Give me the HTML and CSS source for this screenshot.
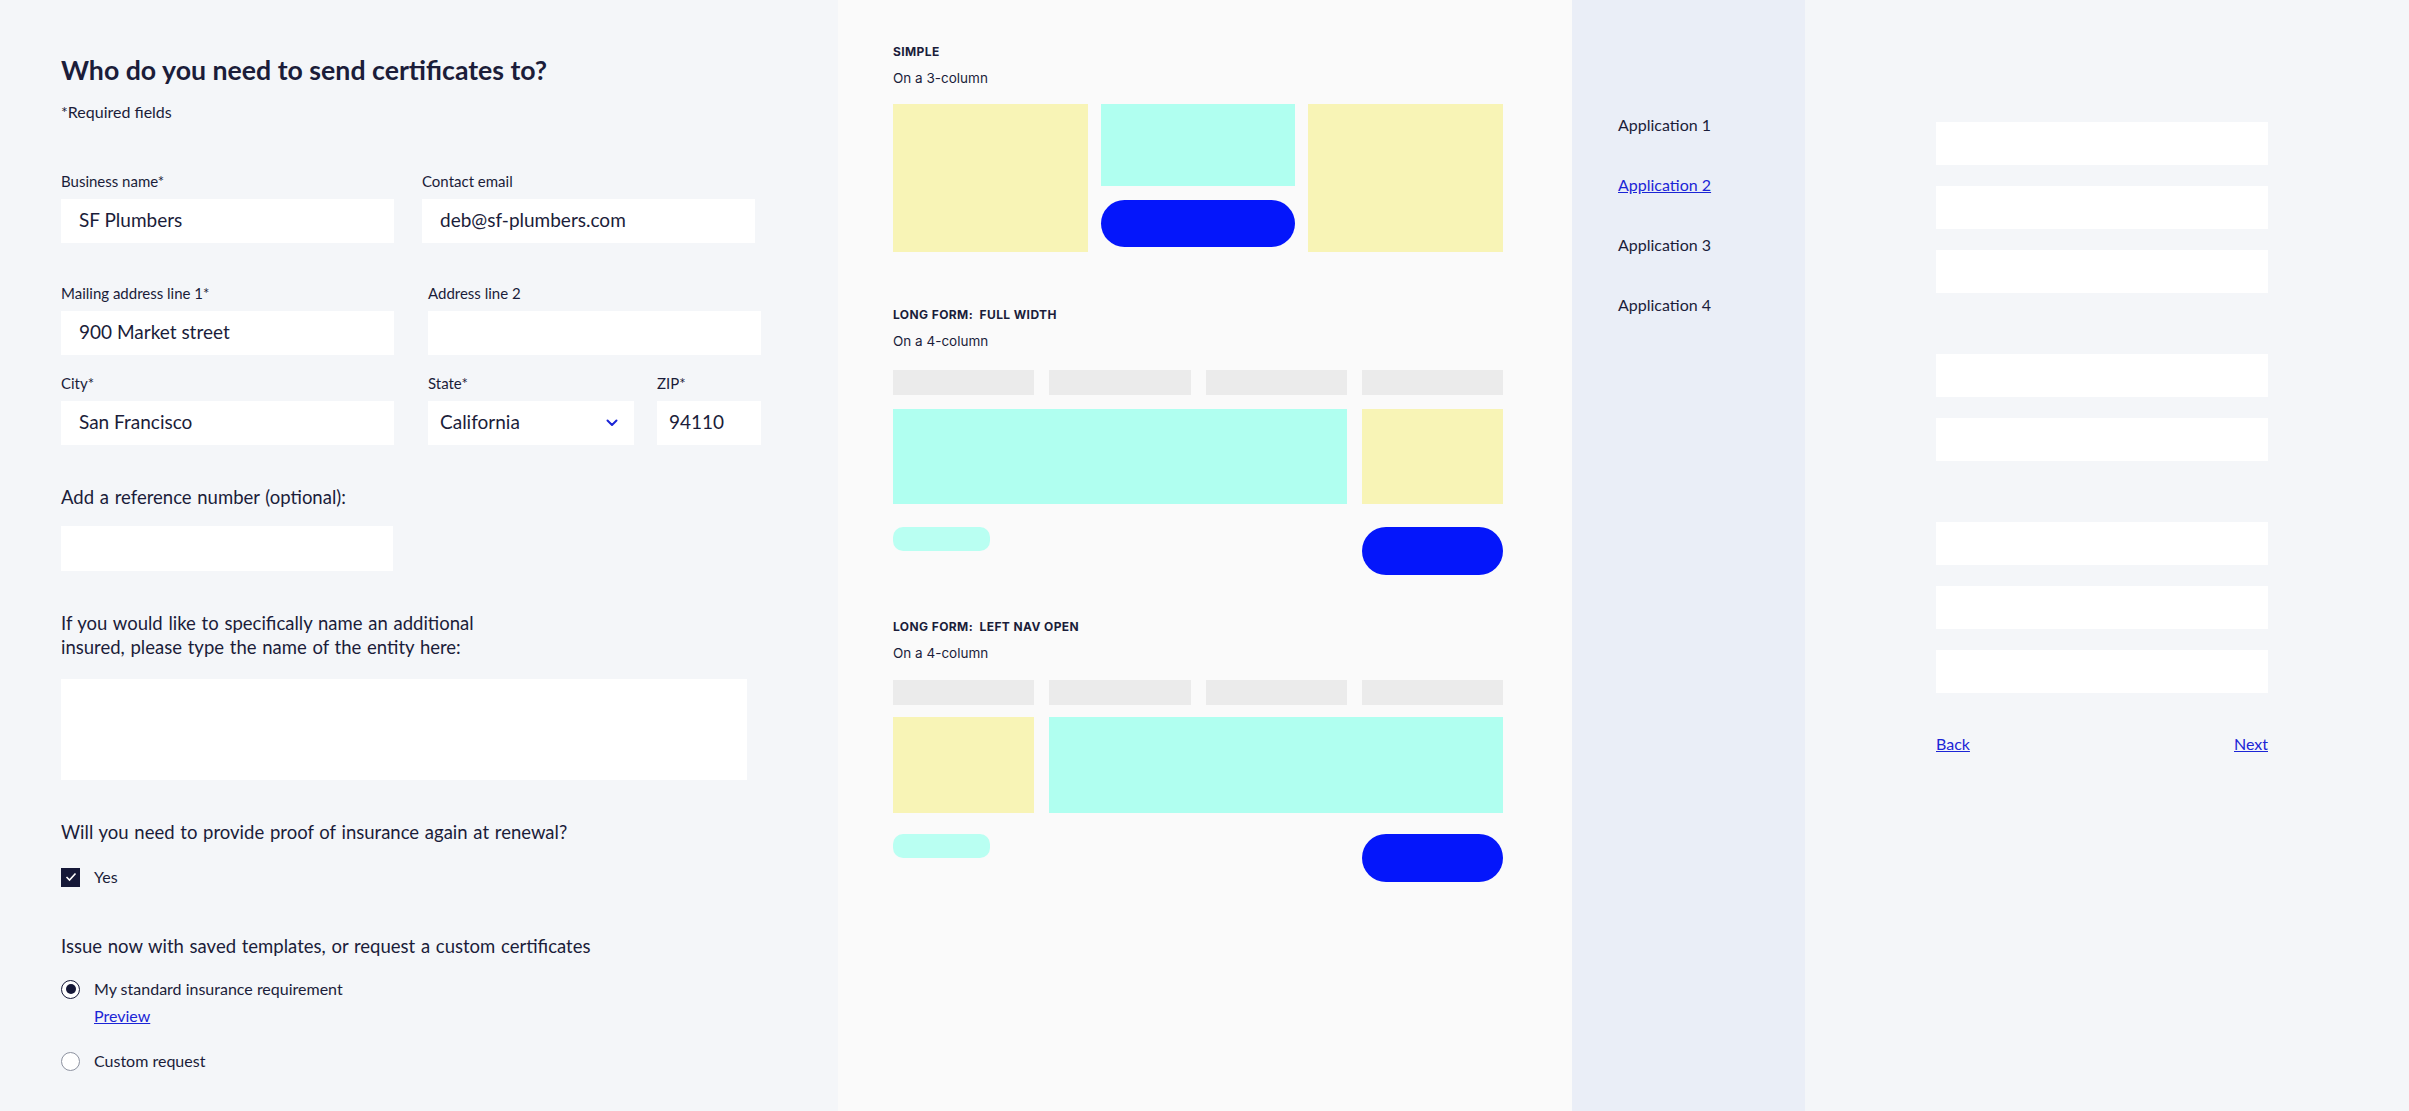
FILE: index.html
```html
<!DOCTYPE html>
<html>
  <head>
    <meta charset="UTF-8" />
    <meta name="viewport" content="width=device-width, initial-scale=1.0" />
    <link rel="stylesheet" href="styles.css">
    <title>Certificates</title>
  </head>

  <body>
    <!-- the form itself -->
    <section class="form-panel">
      <h1 class="form-title">Who do you need to send certificates to?</h1>
      <p class="required-note">*Required fields</p>

      <div class="field-row row-1">
        <div class="field">
          <label>Business name*</label>
          <input type="text" value="SF Plumbers">
        </div>
        <div class="field">
          <label>Contact email</label>
          <input type="text" value="deb@sf-plumbers.com">
        </div>
      </div>

      <div class="field-row row-2">
        <div class="field">
          <label>Mailing address line 1*</label>
          <input type="text" value="900 Market street">
        </div>
        <div class="field">
          <label>Address line 2</label>
          <input type="text" value="">
        </div>
      </div>

      <div class="field-row row-3">
        <div class="field city">
          <label>City*</label>
          <input type="text" value="San Francisco">
        </div>
        <div class="field state">
          <label>State*</label>
          <div class="select-wrap">
            <select>
              <option>California</option>
            </select>
            <svg class="chevron" width="12" height="8" viewBox="0 0 12 8"><path d="M1.5 1.5 L6 6 L10.5 1.5" fill="none" stroke="#1b25d6" stroke-width="2" stroke-linecap="round" stroke-linejoin="round"/></svg>
          </div>
        </div>
        <div class="field zip-field">
          <label>ZIP*</label>
          <input type="text" value="94110" class="zip">
        </div>
      </div>

      <p class="question q-ref">Add a reference number (optional):</p>
      <input type="text" class="ref-input">

      <p class="question q-insured">If you would like to specifically name an additional<br>insured, please type the name of the entity here:</p>
      <textarea class="entity-box"></textarea>

      <p class="question q-renewal">Will you need to provide proof of insurance again at renewal?</p>
      <div class="check-row">
        <span class="checkbox"><svg width="12" height="10" viewBox="0 0 12 10"><path d="M1.5 5 L4.5 8 L10.5 1.5" fill="none" stroke="#fff" stroke-width="1.6"/></svg></span>
        <span>Yes</span>
      </div>

      <p class="question q-issue">Issue now with saved templates, or request a custom certificates</p>
      <div class="radio-row">
        <span class="radio checked"></span>
        <span>My standard insurance requirement</span>
      </div>
      <a href="#" class="preview-link">Preview</a>
      <div class="radio-row radio-last">
        <span class="radio"></span>
        <span>Custom request</span>
      </div>
    </section>

    <!-- grid layouts -->
    <section class="layouts">
      <div class="layout">
        <h4>SIMPLE</h4>
        <p class="sub">On a 3-column</p>
        <div class="grid-3">
          <div class="block yellow tall"></div>
          <div class="stack">
            <div class="block cyan mid"></div>
            <div class="pill blue"></div>
          </div>
          <div class="block yellow tall"></div>
        </div>
      </div>

      <div class="layout layout-2">
        <h4>LONG FORM:&nbsp; FULL WIDTH</h4>
        <p class="sub">On a 4-column</p>
        <div class="grid-4 cols">
          <div class="col-bar"></div><div class="col-bar"></div><div class="col-bar"></div><div class="col-bar"></div>
        </div>
        <div class="grid-4 content">
          <div class="block cyan span-3"></div>
          <div class="block yellow"></div>
        </div>
        <div class="actions">
          <div class="pill small"></div>
          <div class="pill blue wide"></div>
        </div>
      </div>

      <div class="layout layout-3">
        <h4>LONG FORM:&nbsp; LEFT NAV OPEN</h4>
        <p class="sub">On a 4-column</p>
        <div class="grid-4 cols">
          <div class="col-bar"></div><div class="col-bar"></div><div class="col-bar"></div><div class="col-bar"></div>
        </div>
        <div class="grid-4 content">
          <div class="block yellow"></div>
          <div class="block cyan span-3"></div>
        </div>
        <div class="actions">
          <div class="pill small"></div>
          <div class="pill blue wide"></div>
        </div>
      </div>
    </section>

    <!-- left nav -->
    <nav class="app-nav">
      <ul>
        <li>Application 1</li>
        <li><a href="#">Application 2</a></li>
        <li>Application 3</li>
        <li>Application 4</li>
      </ul>
    </nav>

    <!-- application steps -->
    <section class="steps">
      <div class="bar-group">
        <div class="bar"></div>
        <div class="bar"></div>
        <div class="bar"></div>
      </div>
      <div class="bar-group">
        <div class="bar"></div>
        <div class="bar"></div>
      </div>
      <div class="bar-group">
        <div class="bar"></div>
        <div class="bar"></div>
        <div class="bar"></div>
      </div>
      <div class="step-links">
        <a href="#">Back</a>
        <a href="#">Next</a>
      </div>
    </section>
  </body>
</html>
```

FILE: styles.css
```css
body {
  margin: 0px;
  display: flex;
  height: 100vh;
  overflow: hidden;
  font-family: Lato, "Noto Sans", sans-serif;
  color: #1b1d3a;
}

a {
  color: #1b25d6;
}

/* ---------- form ---------- */
.form-panel {
  width: 838px;
  flex-shrink: 0;
  background-color: #f4f6f9;
  padding: 54px 0px 0px 61px;
  box-sizing: border-box;
}

.form-title {
  margin: 0px;
  font-size: 26.7px;
  line-height: 32px;
  font-weight: 700;
}

.required-note {
  margin: 16px 0px 0px;
  font-size: 16px;
  line-height: 20px;
}

.field-row {
  display: flex;
}
.row-1 {
  margin-top: 49px;
  gap: 28px;
}
.row-2 {
  margin-top: 40px;
  gap: 34px;
}
.row-3 {
  margin-top: 18px;
  gap: 34px;
}
.row-1 .field,
.row-2 .field,
.row-3 .city {
  width: 333px;
}
.row-3 .state {
  width: 206px;
}
.row-3 .zip-field {
  width: 104px;
  margin-left: -11px;
}

.field label {
  display: block;
  font-size: 15px;
  line-height: 20px;
  margin-bottom: 8px;
}

input,
select,
textarea {
  display: block;
  border: none;
  background: #fff;
  font-family: Lato, "Noto Sans", sans-serif;
  color: #1b1d3a;
  outline: none;
  box-sizing: border-box;
  margin: 0px;
}

.field input {
  width: 100%;
  height: 44px;
  padding: 0px 18px 3px;
  font-size: 19px;
}
.field input.zip {
  padding: 0px 12px 3px;
}

.select-wrap {
  position: relative;
}
.select-wrap select {
  width: 100%;
  height: 44px;
  appearance: none;
  -webkit-appearance: none;
  padding: 0px 12px 3px;
  font-size: 19px;
  border-radius: 0px;
}
.chevron {
  position: absolute;
  right: 16px;
  top: 18px;
}

.question {
  margin: 0px;
  font-size: 18.5px;
  line-height: 24px;
  word-spacing: 1px;
}
.q-ref {
  margin-top: 40px;
}
.ref-input {
  margin-top: 17px;
  width: 332px;
  height: 45px;
}
.q-insured {
  margin-top: 40px;
}
.entity-box {
  margin-top: 20px;
  width: 686px;
  height: 101px;
  resize: none;
}
.q-renewal {
  margin-top: 40px;
}
.q-issue {
  margin-top: 47px;
}

.check-row,
.radio-row {
  display: flex;
  align-items: center;
  gap: 14px;
  font-size: 16px;
  line-height: 20px;
}
.check-row {
  margin-top: 23px;
}
.radio-row {
  margin-top: 21px;
}
.radio-last {
  margin-top: 25px;
}

.checkbox {
  width: 19px;
  height: 19px;
  background-color: #151838;
  display: flex;
  align-items: center;
  justify-content: center;
}

.radio {
  width: 19px;
  height: 19px;
  box-sizing: border-box;
  border-radius: 50%;
  border: 1px solid #8d92a0;
  background: #fff;
  display: flex;
  align-items: center;
  justify-content: center;
}
.radio.checked {
  border: 1.5px solid #151838;
}
.radio.checked::after {
  content: "";
  width: 10px;
  height: 10px;
  border-radius: 50%;
  background-color: #151838;
}

.preview-link {
  display: block;
  margin: 7px 0px 0px 33px;
  font-size: 16px;
  line-height: 20px;
}

/* ---------- layout samples ---------- */
.layouts {
  width: 734px;
  flex-shrink: 0;
  background-color: #fafafa;
  padding: 44px 69px 0px 55px;
  box-sizing: border-box;
  font-family: Inter, sans-serif;
}

.layout h4 {
  margin: 0px;
  font-size: 12px;
  line-height: 16px;
  font-weight: 700;
  letter-spacing: 0.4px;
  color: #1b1d3a;
  white-space: pre;
}
.layout .sub {
  margin: 8px 0px 0px;
  font-size: 13.5px;
  line-height: 20px;
  color: #1b1d3a;
}

.layout-2 {
  margin-top: 55px;
}
.layout-3 {
  margin-top: 44px;
}

.block.yellow {
  background-color: #f8f4b6;
}
.block.cyan {
  background-color: #b0fff0;
}

.grid-3 {
  margin-top: 16px;
  display: grid;
  grid-template-columns: repeat(3, 1fr);
  column-gap: 13px;
}
.block.tall {
  height: 148px;
}
.stack {
  display: flex;
  flex-direction: column;
  gap: 14px;
}
.block.mid {
  height: 82px;
}
.pill {
  border-radius: 24px;
}
.pill.blue {
  background-color: #0416fb;
  height: 47px;
}

.grid-4 {
  display: grid;
  grid-template-columns: repeat(4, 1fr);
  column-gap: 15px;
}
.grid-4.cols {
  margin-top: 19px;
}
.col-bar {
  height: 25px;
  background-color: #ebebeb;
}
.grid-4.content {
  margin-top: 14px;
}
.grid-4.content .block {
  height: 95px;
}
.span-3 {
  grid-column: span 3;
}
.layout-3 .grid-4.cols {
  margin-top: 17px;
}
.layout-3 .grid-4.content {
  margin-top: 12px;
}
.layout-3 .grid-4.content .block {
  height: 96px;
}

.actions {
  margin-top: 23px;
  display: flex;
  justify-content: space-between;
  align-items: flex-start;
}
.layout-3 .actions {
  margin-top: 21px;
}
.pill.small {
  width: 97px;
  height: 24px;
  border-radius: 10px;
  background-color: #b9fff2;
}
.pill.wide {
  width: 141px;
  height: 48px;
}

/* ---------- nav ---------- */
.app-nav {
  width: 233px;
  flex-shrink: 0;
  background-color: #eaeef7;
}
.app-nav ul {
  list-style: none;
  margin: 0px;
  padding: 115px 0px 0px 46px;
  display: flex;
  flex-direction: column;
  gap: 40px;
}
.app-nav li {
  font-size: 16px;
  line-height: 20px;
}

/* ---------- steps ---------- */
.steps {
  flex: 1;
  background-color: #f4f6f9;
  padding: 122px 0px 0px 131px;
}
.bar-group {
  display: flex;
  flex-direction: column;
  gap: 21px;
  width: 332px;
  margin-bottom: 61px;
}
.bar {
  height: 43px;
  background-color: #fff;
}
.bar-group:nth-child(3) {
  margin-bottom: 41px;
}
.step-links {
  width: 332px;
  display: flex;
  justify-content: space-between;
  font-size: 16px;
  line-height: 20px;
}
```
